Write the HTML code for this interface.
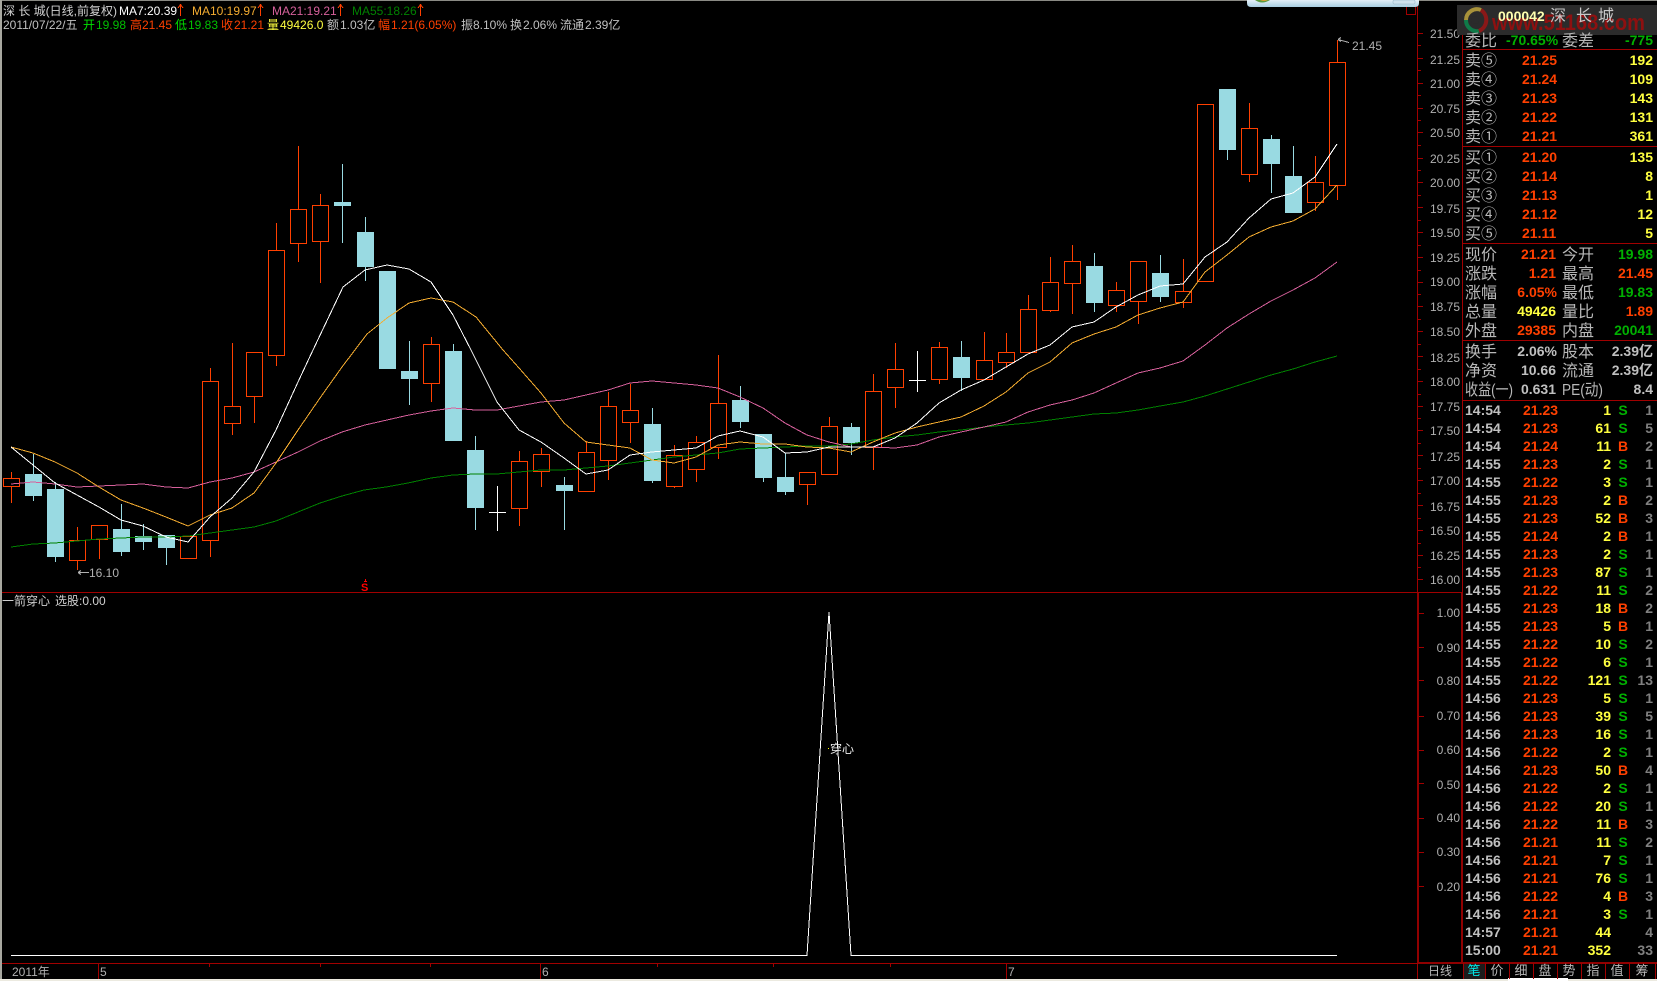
<!DOCTYPE html>
<html><head><meta charset="utf-8"><title>深长城</title>
<style>
html,body{margin:0;padding:0;background:#000;overflow:hidden}
svg{display:block;position:absolute;left:0;top:0}
text{font-family:"Liberation Sans","WenQuanYi Zen Hei","Noto Sans CJK SC",sans-serif;white-space:pre}
.cn{font-size:16px;fill:#b8b8b8}
.b{font-weight:bold;font-size:14px}
.r{fill:#ff4000}.y{fill:#ffff40}.g{fill:#00b000}.w{fill:#c0c0c0}.d{fill:#808080}
</style></head><body>
<svg width="1657" height="981" viewBox="0 0 1657 981" xmlns="http://www.w3.org/2000/svg">
<rect width="1657" height="981" fill="#000"/>
<!-- window edges -->
<g shape-rendering="crispEdges">
<rect x="0" y="0" width="1657" height="1" fill="#8a8a84"/>
<rect x="0" y="0" width="2" height="981" fill="#a8a8a0"/>
<rect x="0" y="979" width="1657" height="2" fill="#eceae0"/>
<rect x="1508" y="978" width="60" height="3" fill="#fff"/>
<!-- axis + dividers -->
<path d="M1417.5 0V593M1462.5 5V593" stroke="#a00000" fill="none"/>
<rect x="1417" y="592" width="2" height="371" fill="#900000"/>
<rect x="1461" y="592" width="2" height="371" fill="#900000"/>
<path d="M2 592.5H1463M2 963.5H1657M1462 49.5H1657M1462 146.5H1657M1462 243.5H1657M1462 340.5H1657M1462 400.5H1657" stroke="#a00000" fill="none"/>
<rect x="1417" y="962" width="240" height="2" fill="#900000"/>
<!-- price ticks -->
<path stroke="#a00000" fill="none" d="M1418 33.5h5M1418 58.5h5M1418 83.5h5M1418 108.5h5M1418 132.5h5M1418 158.5h5M1418 182.5h5M1418 207.5h5M1418 232.5h5M1418 257.5h5M1418 282.5h5M1418 306.5h5M1418 331.5h5M1418 356.5h5M1418 381.5h5M1418 406.5h5M1418 430.5h5M1418 455.5h5M1418 480.5h5M1418 505.5h5M1418 530.5h5M1418 555.5h5M1418 579.5h5
M1418 45.5h3M1418 70.5h3M1418 95.5h3M1418 120.5h3M1418 145.5h3M1418 170.5h3M1418 195.5h3M1418 220.5h3M1418 245.5h3M1418 270.5h3M1418 294.5h3M1418 319.5h3M1418 344.5h3M1418 369.5h3M1418 394.5h3M1418 418.5h3M1418 443.5h3M1418 468.5h3M1418 493.5h3M1418 518.5h3M1418 543.5h3M1418 567.5h3
M1419 613.5h5M1419 647.5h5M1419 680.5h5M1419 716.5h5M1419 750.5h5M1419 783.5h5M1419 818.5h5M1419 852.5h5M1419 886.5h5"/>
<!-- time ticks -->
<path stroke="#a00000" fill="none" d="M98.5 963V979M540.5 963V979M1006.5 963V979M209.5 963v4M320.5 963v4M430.5 963v4M657.5 963v4M773.5 963v4M890.5 963v4M1417.5 963V979"/>
<!-- tab separators -->
<rect x="1464" y="964" width="21" height="15" fill="#1c1c1c"/>
<path stroke="#a00000" fill="none" d="M1463.5 963V979M1485.5 963V979M1509.5 963V979M1533.5 963V979M1557.5 963V979M1581.5 963V979M1605.5 963V979M1629.5 963V979M1655.5 963V979"/>

<!-- red candles -->
<path stroke="#ff4000" fill="none" d="
M3.5 478.5H19.5V486.5H3.5ZM11.5 472V478M11.5 487V503
M69.5 540.5H85.5V560.5H69.5ZM77.5 527V540M77.5 561V570
M91.5 525.5H107.5V539.5H91.5ZM99.5 540V559
M180.5 536.5H196.5V558.5H180.5Z
M202.5 381.5H218.5V540.5H202.5ZM210.5 368V381M210.5 541V557
M224.5 406.5H240.5V423.5H224.5ZM232.5 343V406M232.5 424V435
M246.5 352.5H262.5V396.5H246.5ZM254.5 397V423
M268.5 250.5H284.5V355.5H268.5ZM276.5 223V250M276.5 356V366
M290.5 209.5H306.5V243.5H290.5ZM298.5 146V209M298.5 244V262
M312.5 205.5H328.5V241.5H312.5ZM320.5 194V205M320.5 242V283
M423.5 344.5H439.5V383.5H423.5ZM431.5 337V344M431.5 384V402
M511.5 461.5H527.5V508.5H511.5ZM519.5 451V461M519.5 509V526
M533.5 454.5H549.5V471.5H533.5ZM541.5 448V454M541.5 472V487
M578.5 452.5H594.5V491.5H578.5ZM586.5 441V452
M600.5 406.5H616.5V460.5H600.5ZM608.5 392V406M608.5 461V480
M622.5 410.5H638.5V422.5H622.5ZM630.5 384V410M630.5 423V443
M666.5 455.5H682.5V486.5H666.5ZM674.5 445V455M674.5 487V488
M688.5 442.5H704.5V469.5H688.5ZM696.5 436V442M696.5 470V482
M710.5 403.5H726.5V447.5H710.5ZM718.5 355V403M718.5 448V459
M799.5 472.5H815.5V484.5H799.5ZM807.5 485V505
M821.5 426.5H837.5V474.5H821.5ZM829.5 417V426
M865.5 391.5H881.5V447.5H865.5ZM873.5 374V391M873.5 448V470
M887.5 369.5H903.5V387.5H887.5ZM895.5 343V369M895.5 388V408
M931.5 347.5H947.5V379.5H931.5ZM939.5 342V347M939.5 380V384
M976.5 360.5H992.5V379.5H976.5ZM984.5 332V360
M998.5 352.5H1014.5V362.5H998.5ZM1006.5 333V352M1006.5 363V368
M1020.5 309.5H1036.5V352.5H1020.5ZM1028.5 295V309
M1042.5 282.5H1058.5V310.5H1042.5ZM1050.5 257V282M1050.5 311V312
M1064.5 261.5H1080.5V283.5H1064.5ZM1072.5 245V261M1072.5 284V314
M1108.5 290.5H1124.5V305.5H1108.5ZM1116.5 282V290M1116.5 306V312
M1130.5 261.5H1146.5V301.5H1130.5ZM1138.5 302V324
M1175.5 291.5H1191.5V302.5H1175.5ZM1183.5 259V291M1183.5 303V308
M1197.5 104.5H1213.5V281.5H1197.5Z
M1241.5 128.5H1257.5V174.5H1241.5ZM1249.5 103V128M1249.5 175V182
M1307.5 182.5H1323.5V202.5H1307.5ZM1315.5 156V182M1315.5 203V211
M1329.5 62.5H1345.5V185.5H1329.5ZM1337.5 40V62M1337.5 186V200"/>
<!-- cyan wicks -->
<path stroke="#99dae2" fill="none" d="M33.5 454V501M55.5 482V562M121.5 504V556M143.5 524V550M166.5 535V565M342.5 164V243M365.5 217V281M409.5 341V405M453.5 344V441M475.5 436V530M564.5 477V530M652.5 408V483M740.5 386V428M763.5 434V482M785.5 453V495M851.5 423V455M961.5 341V391M1094.5 253V312M1160.5 255V302M1227.5 89V160M1271.5 135V193M1293.5 146V213"/>
<!-- cyan bodies -->
<path fill="#99dae2" d="M25 474h17V496h-17zM47 489h17V557h-17zM113 529h17V552h-17zM135 536h17V542h-17zM158 535h17V548h-17zM334 202h17V206h-17zM357 232h17V267h-17zM379 271h17V369h-17zM401 371h17V379h-17zM445 351h17V441h-17zM467 450h17V508h-17zM556 485h17V491h-17zM644 424h17V481h-17zM732 400h17V422h-17zM755 434h17V478h-17zM777 477h17V492h-17zM843 427h17V443h-17zM953 357h17V378h-17zM1086 266h17V303h-17zM1152 273h17V297h-17zM1219 89h17V150h-17zM1263 139h17V164h-17zM1285 176h17V213h-17z"/>
<!-- doji crosses -->
<path stroke="#fff" fill="none" d="M497.5 486V531M489 512.5H506M917.5 351V392M909 380.5H926"/>

<!-- moving averages -->
<polyline fill="none" stroke="#008000" points="11,547 33,544 55,543 77,541 99,539 121,538 143,537 166,537 188,536 210,533 232,530 254,527 276,521 298,512 320,503 342,496 364,490 386,487 408,483 431,478 453,475 475,474 497,474 519,472 541,470 564,470 586,468 608,466 630,463 652,460 674,457 696,455 718,453 740,449 763,448 785,447 807,446 829,446 851,444 873,440 895,437 917,435 939,432 961,430 984,427 1006,425 1028,423 1050,420 1072,417 1094,414 1116,413 1138,410 1160,406 1183,402 1205,396 1227,389 1249,382 1271,375 1293,369 1315,362 1337,356"/>
<polyline fill="none" stroke="#d6609b" points="11,484 33,482 55,484 77,487 99,486 121,485 143,484 166,487 188,488 210,482 232,478 254,472 276,462 298,452 320,441 342,432 365,425 387,420 409,415 431,411 453,408 475,410 497,410 519,406 541,402 564,400 586,395 608,390 630,383 652,381 674,383 696,385 718,388 740,397 763,408 785,423 807,435 829,442 851,447 873,447 895,448 917,445 939,437 961,432 984,427 1006,422 1028,412 1050,405 1072,400 1094,393 1116,383 1138,373 1160,368 1183,361 1205,345 1227,328 1249,314 1271,301 1293,290 1315,278 1337,262"/>
<polyline fill="none" stroke="#f4ac30" points="11,447 33,453 55,462 77,473 99,487 121,500 143,508 166,517 188,526 210,515 232,508 254,493 276,463 298,430 320,398 342,367 367,334 387,318 409,303 431,298 453,302 476,317 503,350 519,368 541,393 564,423 586,442 608,445 630,448 652,460 674,463 696,457 718,445 740,442 763,444 785,444 807,447 829,448 851,452 873,442 895,433 917,427 939,422 961,417 984,406 1006,392 1028,373 1050,362 1072,343 1094,334 1116,327 1138,315 1160,308 1183,302 1205,272 1227,255 1249,237 1271,227 1293,221 1315,209 1337,185"/>
<polyline fill="none" stroke="#fff" points="11,447 33,465 55,483 77,495 99,507 121,520 143,526 166,537 188,542 210,517 232,498 254,472 276,430 298,382 313,350 343,287 365,270 387,265 409,269 431,282 453,315 471,350 497,402 519,430 541,442 564,458 586,474 608,470 630,455 652,452 674,450 696,448 718,436 740,431 763,437 785,453 807,452 829,447 851,447 873,447 895,438 917,423 939,403 961,390 984,380 1006,367 1028,354 1050,345 1072,327 1094,322 1116,307 1138,295 1160,286 1183,284 1205,257 1227,242 1249,218 1271,199 1293,193 1315,177 1337,144"/>

<!-- indicator -->
<path fill="none" stroke="#fff" d="M11 955.5H807L829 612L851 955.5H1337"/>
<rect x="828" y="748" width="1" height="1" fill="#ff0"/>
<!-- markers -->
<path fill="none" stroke="#b0b0b0" d="M1338 39.5L1349 42.5M1338 39.5l3-2M1338 39.5l3 2M78 572.5H89M78 572.5l3-2M78 572.5l3 2"/>
<path fill="none" stroke="#ff0000" d="M365.5 579v3M364 581.5h3"/>
<!-- header arrows -->
<path fill="none" stroke="#ff4000" d="M180.5 16V5M178 8l2.500-3.500L183 8M260.500 16V5M258 8l2.500-3.500L263 8M340.500 16V5M338 8l2.500-3.500L343 8M420.500 16V5M418 8l2.500-3.500L423 8"/>
<!-- small red box top -->
<path fill="none" stroke="#a00000" d="M1406.500 0V14.500H1415.500V0"/>
<!-- top window peeking -->
<defs><linearGradient id="wb" x1="0" y1="0" x2="0" y2="1"><stop offset="0" stop-color="#e4eff8"/><stop offset="1" stop-color="#a9cfe2"/></linearGradient></defs>
</g>
<path d="M1247 0H1419V3Q1419 7 1415 7H1251Q1247 7 1247 3Z" fill="url(#wb)"/>
<path d="M1255 0Q1262 5 1270 0Z" fill="#5a9a40"/><path d="M1260 0Q1264 2 1268 0Z" fill="#e0a030"/>
<rect x="1393" y="0" width="22" height="4" rx="1" fill="#cfe2ee" stroke="#8fb0c6" stroke-width=".5"/>

<!-- axis labels -->
<g font-size="12" fill="#b0b0b0" text-anchor="end">
<text x="1460" y="38">21.50</text><text x="1460" y="64">21.25</text><text x="1460" y="88">21.00</text><text x="1460" y="113">20.75</text><text x="1460" y="137">20.50</text><text x="1460" y="163">20.25</text><text x="1460" y="187">20.00</text><text x="1460" y="213">19.75</text><text x="1460" y="237">19.50</text><text x="1460" y="262">19.25</text><text x="1460" y="286">19.00</text><text x="1460" y="311">18.75</text><text x="1460" y="336">18.50</text><text x="1460" y="362">18.25</text><text x="1460" y="386">18.00</text><text x="1460" y="411">17.75</text><text x="1460" y="435">17.50</text><text x="1460" y="461">17.25</text><text x="1460" y="485">17.00</text><text x="1460" y="511">16.75</text><text x="1460" y="535">16.50</text><text x="1460" y="560">16.25</text><text x="1460" y="584">16.00</text>
<text x="1460" y="617">1.00</text><text x="1460" y="652">0.90</text><text x="1460" y="685">0.80</text><text x="1460" y="720">0.70</text><text x="1460" y="754">0.60</text><text x="1460" y="789">0.50</text><text x="1460" y="822">0.40</text><text x="1460" y="856">0.30</text><text x="1460" y="891">0.20</text>
</g>
<g font-size="12" fill="#b0b0b0">
<text x="1352" y="50">21.45</text><text x="89" y="577">16.10</text>
<text x="12" y="976">2011年</text><text x="100" y="976">5</text><text x="542" y="976">6</text><text x="1008" y="976">7</text>
</g>
<text x="361" y="591" font-size="11" font-weight="bold" fill="#ff0000">S</text>
<text x="2" y="605" font-size="12" fill="#d0d0d0">一箭穿心</text><text x="55" y="605" font-size="12" fill="#d0d0d0">选股:0.00</text>
<text x="830" y="753" font-size="12" fill="#f0f0f0">穿心</text>

<!-- header text -->
<g font-size="12">
<text x="3" y="15" fill="#d0d0d0">深 长 城(日线,前复权)</text>
<text x="119" y="15" fill="#fff">MA7:20.39</text>
<text x="192" y="15" fill="#f4ac30">MA10:19.97</text>
<text x="272" y="15" fill="#d6609b">MA21:19.21</text>
<text x="352" y="15" fill="#008000">MA55:18.26</text>
<text x="3" y="29" fill="#c0c0c0">2011/07/22/五</text>
<text x="83" y="29" fill="#00e000">开</text><text x="96" y="29" fill="#00c000">19.98</text>
<text x="130" y="29" fill="#ff4000">高</text><text x="142" y="29" fill="#ff4000">21.45</text>
<text x="175" y="29" fill="#00e000">低</text><text x="188" y="29" fill="#00c000">19.83</text>
<text x="221" y="29" fill="#ff4000">收</text><text x="234" y="29" fill="#ff4000">21.21</text>
<text x="267" y="29" fill="#ffff40">量</text><text x="280" y="29" fill="#ffff40">49426.0</text>
<text x="327" y="29" fill="#c0c0c0">额</text><text x="340" y="29" fill="#c0c0c0">1.03亿</text>
<text x="378" y="29" fill="#ff4000">幅</text><text x="391" y="29" fill="#ff4000">1.21(6.05%)</text>
<text x="461" y="29" fill="#c0c0c0">振</text><text x="473" y="29" fill="#c0c0c0">8.10%</text>
<text x="510" y="29" fill="#c0c0c0">换</text><text x="523" y="29" fill="#c0c0c0">2.06%</text>
<text x="560" y="29" fill="#c0c0c0">流通</text><text x="585" y="29" fill="#c0c0c0">2.39亿</text>
</g>

<!-- title box + watermark -->
<rect x="1457" y="5" width="200" height="30" fill="#2b2b2b" shape-rendering="crispEdges"/>
<path d="M1481 10A11 11 0 0 0 1466 20" fill="none" stroke="#a8923a" stroke-width="4"/>
<path d="M1466 20A11 11 0 0 0 1479 31" fill="none" stroke="#0f7a48" stroke-width="4"/>
<path d="M1481 10A12 12 0 0 1 1479 31" fill="none" stroke="#8a1818" stroke-width="4"/>
<circle cx="1475" cy="20" r="4" fill="#2b2b2b"/>
<text x="1492" y="30" font-size="22" font-weight="bold" fill="#8e1010" textLength="153" lengthAdjust="spacingAndGlyphs">www.51168.com</text>
<text x="1498" y="21" font-size="14" font-weight="bold" fill="#ffffb0">000042</text>
<text x="1550" y="21" font-size="16" fill="#c8c8c8">深</text><text x="1576" y="21" font-size="16" fill="#c8c8c8">长</text><text x="1598" y="21" font-size="16" fill="#c8c8c8">城</text>

<!-- quote panel -->
<text class="cn" x="1465" y="46">委比</text>
<text class="b g" x="1506" y="45">-70.65%</text>
<text class="cn" x="1562" y="46">委差</text>
<text class="b g" x="1653" y="45" text-anchor="end">-775</text>

<g class="cn">
<text x="1465" y="66">卖⑤</text><text x="1465" y="85">卖④</text><text x="1465" y="104">卖③</text><text x="1465" y="123">卖②</text><text x="1465" y="142">卖①</text>
<text x="1465" y="163">买①</text><text x="1465" y="182">买②</text><text x="1465" y="201">买③</text><text x="1465" y="220">买④</text><text x="1465" y="239">买⑤</text>
<text x="1465" y="260">现价</text><text x="1465" y="279">涨跌</text><text x="1465" y="298">涨幅</text><text x="1465" y="317">总量</text><text x="1465" y="336">外盘</text>
<text x="1562" y="260">今开</text><text x="1562" y="279">最高</text><text x="1562" y="298">最低</text><text x="1562" y="317">量比</text><text x="1562" y="336">内盘</text>
<text x="1465" y="357">换手</text><text x="1465" y="376">净资</text><text x="1465" y="395" textLength="48" lengthAdjust="spacingAndGlyphs">收益(一)</text>
<text x="1562" y="357">股本</text><text x="1562" y="376">流通</text><text x="1562" y="395" textLength="41" lengthAdjust="spacingAndGlyphs">PE(动)</text>
</g>

<g class="b r">
<text x="1522" y="65">21.25</text><text x="1522" y="84">21.24</text><text x="1522" y="103">21.23</text><text x="1522" y="122">21.22</text><text x="1522" y="141">21.21</text>
<text x="1522" y="162">21.20</text><text x="1522" y="181">21.14</text><text x="1522" y="200">21.13</text><text x="1522" y="219">21.12</text><text x="1522" y="238">21.11</text>
</g>
<g class="b y" text-anchor="end">
<text x="1653" y="65">192</text><text x="1653" y="84">109</text><text x="1653" y="103">143</text><text x="1653" y="122">131</text><text x="1653" y="141">361</text>
<text x="1653" y="162">135</text><text x="1653" y="181">8</text><text x="1653" y="200">1</text><text x="1653" y="219">12</text><text x="1653" y="238">5</text>
</g>
<g class="b" text-anchor="end">
<text class="r" x="1556" y="259">21.21</text><text class="r" x="1556" y="278">1.21</text><text class="r" x="1557" y="297">6.05%</text><text class="y" x="1556" y="316">49426</text><text class="r" x="1556" y="335">29385</text>
<text class="g" x="1653" y="259">19.98</text><text class="r" x="1653" y="278">21.45</text><text class="g" x="1653" y="297">19.83</text><text class="r" x="1653" y="316">1.89</text><text class="g" x="1653" y="335">20041</text>
<text class="w" x="1557" y="356">2.06%</text><text class="w" x="1556" y="375">10.66</text><text class="w" x="1556" y="394">0.631</text>
<text class="w" x="1653" y="356">2.39亿</text><text class="w" x="1653" y="375">2.39亿</text><text class="w" x="1653" y="394">8.4</text>
</g>

<!-- tick table -->
<g class="b w">
<text x="1465" y="415">14:54</text><text x="1465" y="433">14:54</text><text x="1465" y="451">14:54</text><text x="1465" y="469">14:55</text><text x="1465" y="487">14:55</text><text x="1465" y="505">14:55</text><text x="1465" y="523">14:55</text><text x="1465" y="541">14:55</text><text x="1465" y="559">14:55</text><text x="1465" y="577">14:55</text><text x="1465" y="595">14:55</text><text x="1465" y="613">14:55</text><text x="1465" y="631">14:55</text><text x="1465" y="649">14:55</text><text x="1465" y="667">14:55</text><text x="1465" y="685">14:55</text><text x="1465" y="703">14:56</text><text x="1465" y="721">14:56</text><text x="1465" y="739">14:56</text><text x="1465" y="757">14:56</text><text x="1465" y="775">14:56</text><text x="1465" y="793">14:56</text><text x="1465" y="811">14:56</text><text x="1465" y="829">14:56</text><text x="1465" y="847">14:56</text><text x="1465" y="865">14:56</text><text x="1465" y="883">14:56</text><text x="1465" y="901">14:56</text><text x="1465" y="919">14:56</text><text x="1465" y="937">14:57</text><text x="1465" y="955">15:00</text>
</g>
<g class="b r">
<text x="1523" y="415">21.23</text><text x="1523" y="433">21.23</text><text x="1523" y="451">21.24</text><text x="1523" y="469">21.23</text><text x="1523" y="487">21.22</text><text x="1523" y="505">21.23</text><text x="1523" y="523">21.23</text><text x="1523" y="541">21.24</text><text x="1523" y="559">21.23</text><text x="1523" y="577">21.23</text><text x="1523" y="595">21.22</text><text x="1523" y="613">21.23</text><text x="1523" y="631">21.23</text><text x="1523" y="649">21.22</text><text x="1523" y="667">21.22</text><text x="1523" y="685">21.22</text><text x="1523" y="703">21.23</text><text x="1523" y="721">21.23</text><text x="1523" y="739">21.23</text><text x="1523" y="757">21.22</text><text x="1523" y="775">21.23</text><text x="1523" y="793">21.22</text><text x="1523" y="811">21.22</text><text x="1523" y="829">21.22</text><text x="1523" y="847">21.21</text><text x="1523" y="865">21.21</text><text x="1523" y="883">21.21</text><text x="1523" y="901">21.22</text><text x="1523" y="919">21.21</text><text x="1523" y="937">21.21</text><text x="1523" y="955">21.21</text>
</g>
<g class="b y" text-anchor="end">
<text x="1611" y="415">1</text><text x="1611" y="433">61</text><text x="1611" y="451">11</text><text x="1611" y="469">2</text><text x="1611" y="487">3</text><text x="1611" y="505">2</text><text x="1611" y="523">52</text><text x="1611" y="541">2</text><text x="1611" y="559">2</text><text x="1611" y="577">87</text><text x="1611" y="595">11</text><text x="1611" y="613">18</text><text x="1611" y="631">5</text><text x="1611" y="649">10</text><text x="1611" y="667">6</text><text x="1611" y="685">121</text><text x="1611" y="703">5</text><text x="1611" y="721">39</text><text x="1611" y="739">16</text><text x="1611" y="757">2</text><text x="1611" y="775">50</text><text x="1611" y="793">2</text><text x="1611" y="811">20</text><text x="1611" y="829">11</text><text x="1611" y="847">11</text><text x="1611" y="865">7</text><text x="1611" y="883">76</text><text x="1611" y="901">4</text><text x="1611" y="919">3</text><text x="1611" y="937">44</text><text x="1611" y="955">352</text>
</g>
<g font-size="14" font-weight="bold" text-anchor="middle">
<text class="g" x="1623" y="415">S</text><text class="g" x="1623" y="433">S</text><text class="r" x="1623" y="451">B</text><text class="g" x="1623" y="469">S</text><text class="g" x="1623" y="487">S</text><text class="r" x="1623" y="505">B</text><text class="r" x="1623" y="523">B</text><text class="r" x="1623" y="541">B</text><text class="g" x="1623" y="559">S</text><text class="g" x="1623" y="577">S</text><text class="g" x="1623" y="595">S</text><text class="r" x="1623" y="613">B</text><text class="r" x="1623" y="631">B</text><text class="g" x="1623" y="649">S</text><text class="g" x="1623" y="667">S</text><text class="g" x="1623" y="685">S</text><text class="g" x="1623" y="703">S</text><text class="g" x="1623" y="721">S</text><text class="g" x="1623" y="739">S</text><text class="g" x="1623" y="757">S</text><text class="r" x="1623" y="775">B</text><text class="g" x="1623" y="793">S</text><text class="g" x="1623" y="811">S</text><text class="r" x="1623" y="829">B</text><text class="g" x="1623" y="847">S</text><text class="g" x="1623" y="865">S</text><text class="g" x="1623" y="883">S</text><text class="r" x="1623" y="901">B</text><text class="g" x="1623" y="919">S</text>
</g>
<g class="b d" text-anchor="end">
<text x="1653" y="415">1</text><text x="1653" y="433">5</text><text x="1653" y="451">2</text><text x="1653" y="469">1</text><text x="1653" y="487">1</text><text x="1653" y="505">2</text><text x="1653" y="523">3</text><text x="1653" y="541">1</text><text x="1653" y="559">1</text><text x="1653" y="577">1</text><text x="1653" y="595">2</text><text x="1653" y="613">2</text><text x="1653" y="631">1</text><text x="1653" y="649">2</text><text x="1653" y="667">1</text><text x="1653" y="685">13</text><text x="1653" y="703">1</text><text x="1653" y="721">5</text><text x="1653" y="739">1</text><text x="1653" y="757">1</text><text x="1653" y="775">4</text><text x="1653" y="793">1</text><text x="1653" y="811">1</text><text x="1653" y="829">3</text><text x="1653" y="847">2</text><text x="1653" y="865">1</text><text x="1653" y="883">1</text><text x="1653" y="901">3</text><text x="1653" y="919">1</text><text x="1653" y="937">4</text><text x="1653" y="955">33</text>
</g>

<!-- bottom tabs -->
<text x="1428" y="975" font-size="12" fill="#b8b8b8">日线</text>
<g font-size="13" fill="#b8b8b8" text-anchor="middle">
<text x="1474" y="975" fill="#00e8e8">笔</text><text x="1497" y="975">价</text><text x="1521" y="975">细</text><text x="1545" y="975">盘</text><text x="1569" y="975">势</text><text x="1593" y="975">指</text><text x="1617" y="975">值</text><text x="1642" y="975">筹</text>
</g>
</svg>
</body></html>
